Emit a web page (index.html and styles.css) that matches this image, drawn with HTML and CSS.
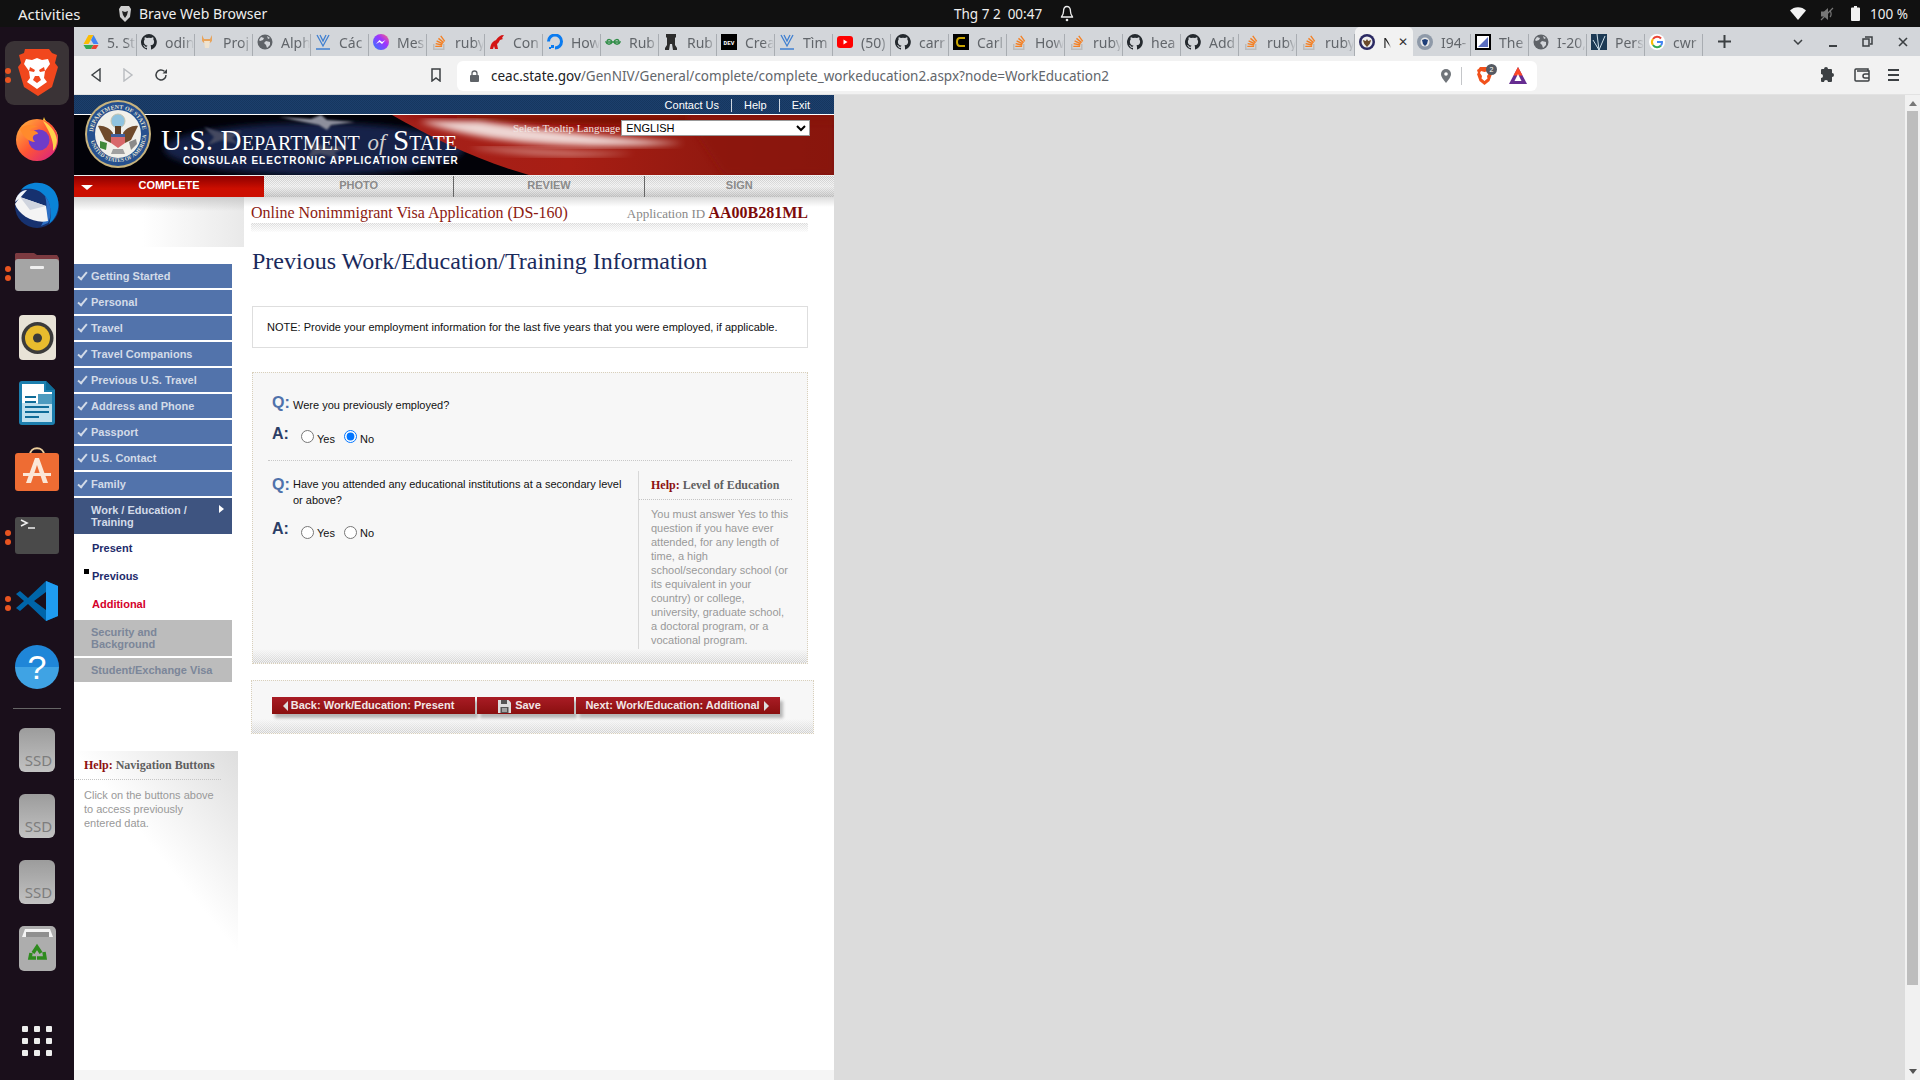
FILE: index.html
```html
<!DOCTYPE html>
<html lang="en">
<head>
  <meta charset="UTF-8" />
  <title>Previous Work/Education/Training Information</title>
  <link rel="stylesheet" href="styles.css">
</head>
<body>
  <svg class="defs" width="0" height="0">
    <defs>
      <symbol id="gh" viewBox="0 0 16 16"><path fill="#24292e" d="M8 0a8 8 0 0 0-2.5 15.6c.4.1.5-.2.5-.4v-1.4c-2.2.5-2.7-1-2.7-1-.4-.9-.9-1.2-.9-1.2-.7-.5.1-.5.1-.5.8.1 1.2.8 1.2.8.7 1.2 1.9.9 2.3.7.1-.5.3-.9.5-1.1-1.8-.2-3.6-.9-3.6-4 0-.9.3-1.6.8-2.1-.1-.2-.4-1 .1-2.1 0 0 .7-.2 2.2.8a7.6 7.6 0 0 1 4 0c1.5-1 2.2-.8 2.2-.8.4 1.1.2 1.9.1 2.1.5.6.8 1.3.8 2.1 0 3.1-1.9 3.7-3.7 3.9.3.3.6.8.6 1.5v2.2c0 .2.1.5.6.4A8 8 0 0 0 8 0z"/></symbol>
      <symbol id="so" viewBox="0 0 16 16"><path fill="#bcbbbb" d="M2 10h1.5v4.500h8.500V10h1.500v6H2z"/><path fill="#f48024" d="M4.500 10.300l6.600 1.400.3-1.400-6.600-1.400zM5.300 7.500l6.100 2.900.6-1.300-6.100-2.900zM7 4.900l5.200 4.300.9-1.100-5.200-4.300zM10.300 1.500L9.200 2.300l4 5.400 1.100-.8zM4.300 13.100h6.800v-1.400H4.300z"/></symbol>
      <symbol id="globe" viewBox="0 0 16 16"><circle cx="8" cy="8" r="7.5" fill="#5f6368"/><path fill="#d3d6da" d="M4 3l3 1-1 2-3 1-1-1zM9 7l4 1 0 3-3 3-1-3-2-2zM10 2l3 2-2 1z"/></symbol>
      <symbol id="vee" viewBox="0 0 16 16"><path fill="none" stroke="#3f7fd0" stroke-width="1.3" d="M2 1l6 11 6-11M5 1l3 6 3-6"/><path stroke="#3f7fd0" stroke-width="1.5" d="M1 15h14"/></symbol>
      <symbol id="seal-fav" viewBox="0 0 16 16"><circle cx="8" cy="8" r="8" fill="#2b2a63"/><circle cx="8" cy="8" r="5.5" fill="#efefef"/><path fill="#6b4a2a" d="M3.800 6l3 1 1.200-2 1.200 2 3-1-1.500 4-2.700 3-2.700-3z"/></symbol>
    </defs>
  </svg>

  <header class="topbar">
    <span class="activities">Activities</span>
    <span class="app-name">
      <svg width="14" height="16" viewBox="0 0 14 16"><path fill="#cfcfcf" d="M3 0h8l2 3-1 8-5 5-5-5-1-8z"/><path fill="#222" d="M4 5l3 1 3-1-1 4-2 3-2-3z"/></svg>
      Brave Web Browser
    </span>
    <span class="clock">Thg 7 2&nbsp; 00:47</span>
    <svg class="bell" width="14" height="17" viewBox="0 0 14 17"><path fill="none" stroke="#eee" stroke-width="1.3" d="M7 1.500c-3 0-3.500 3-3.500 5 0 3-2 5-2 5.500h11c0-.5-2-2.500-2-5.500 0-2-.5-5-3.500-5z"/><circle cx="7" cy="15" r="1.3" fill="#eee"/></svg>
    <span class="tray">
      <svg width="16" height="13" viewBox="0 0 16 13"><path fill="#f2f2f2" d="M0 3.500C4-1 12-1 16 3.500L8 13z"/></svg>
      <svg width="14" height="14" viewBox="0 0 14 14"><path fill="#777" d="M1 4.500h3L8 1v12L4 9.500H1z"/><path stroke="#777" fill="none" stroke-width="1.2" d="M10 4c1.500 1.500 1.500 4.500 0 6M1 13L13 1"/></svg>
      <svg class="batt-icon" width="9" height="15" viewBox="0 0 9 15"><path fill="#f2f2f2" d="M3 0h3v1.500h2a1 1 0 0 1 1 1V14a1 1 0 0 1-1 1H1a1 1 0 0 1-1-1V2.500a1 1 0 0 1 1-1h2z"/></svg>
      <span class="battery">100 %</span>
    </span>
  </header>

  <div class="desktop">
    <nav class="dock">
      <div class="dock-item running active">
        <svg width="42" height="48" viewBox="0 0 42 48"><path fill="#f1471d" d="M9 0h24l3 4 5 2-2 8 3 4-6 20-14 9-14-9-6-20 3-4-2-8 5-2z"/><path fill="#fff" d="M10 10l6 1 5-2 5 2 6-1 2 5-5 7-1 7 3 4-10 7-10-7 3-4-1-7-5-7z"/><path fill="#f1471d" d="M14 18l5 3-1 2-5-1zM28 18l-5 3 1 2 5-1zM19 27h4l2 4-4 3-4-3z"/></svg>
      </div>
      <div class="dock-item">
        <svg width="42" height="44" viewBox="0 0 42 44"><defs><linearGradient id="fx" x1="0" y1="0" x2="1" y2="1"><stop offset="0" stop-color="#ffbd3f"/><stop offset=".5" stop-color="#ff5634"/><stop offset="1" stop-color="#d41b8d"/></linearGradient></defs><path fill="#ffc93c" d="M28 0c1 5 8 8 12 14 3 5 2 12 0 14L24 12z"/><circle cx="21" cy="23" r="21" fill="url(#fx)"/><path fill="#ffd24a" d="M27 4c6 3 13 10 14 19 0 5-2 9-4 11 1-8-2-17-10-30z"/><circle cx="23" cy="23" r="10.500" fill="#6f3cc9"/><path fill="#ff8a2c" d="M4 12c4-5 12-5 18-2-5 0-8 2-8 4 5-1 8 1 8 3-5 0-7 4-3 8-6 0-12-5-15-13z"/></svg>
      </div>
      <div class="dock-item">
        <svg width="48" height="46" viewBox="0 0 48 46"><circle cx="24" cy="24" r="22" fill="#16316f"/><path fill="#0a84d8" d="M8 8C16-2 34-2 42 10c6 10 4 24-6 32 2-3 4-22-6-30C24 6 14 6 8 8z"/><path fill="#2c6fc4" d="M32 14c7 8 7 20 3 27l-7 3c5-8 7-20 4-30z"/><path fill="#f4f4f4" d="M7 15l26 9 2 15C22 42 6 34 2 22z"/><path fill="#cfd4de" d="M7 15l10 13 16-4z"/><path fill="#f2f5fa" d="M2 20C3 14 8 8 14 8l-7 8z"/></svg>
      </div>
      <div class="dock-item running">
        <svg width="44" height="40" viewBox="0 0 44 40"><path fill="#7c3a40" d="M1 2h18l3 2h20l2 3v10H0V3z"/><rect y="8" width="44" height="32" rx="3" fill="#a5a5a5"/><rect x="15" y="15" width="14" height="3" rx="1" fill="#efefef"/></svg>
      </div>
      <div class="dock-item">
        <svg width="37" height="45" viewBox="0 0 37 45"><rect width="37" height="45" rx="4" fill="#e8e3d7"/><circle cx="18.500" cy="23" r="16" fill="#3b3b3b"/><circle cx="18.500" cy="23" r="12.500" fill="#e9bc2e"/><circle cx="18.500" cy="23" r="4.500" fill="#3a3a3a"/></svg>
      </div>
      <div class="dock-item">
        <svg width="36" height="44" viewBox="0 0 36 44"><path fill="#1d7fae" d="M3 0h24l9 9v32a3 3 0 0 1-3 3H3a3 3 0 0 1-3-3V3a3 3 0 0 1 3-3z"/><path fill="#fff" d="M3 3h22v8h8v30H3z"/><path fill="#bfe0ee" d="M3 22h30v19H3z"/><path fill="#0f6c98" d="M27 0l9 9h-9zM6 15h11v2H6zM6 20h11v2H6zM6 25h24v2H6zM6 30h24v2H6zM6 35h14v2H6z"/><rect x="19" y="13" width="14" height="10" fill="#4d9bbf"/></svg>
      </div>
      <div class="dock-item">
        <svg width="44" height="44" viewBox="0 0 44 44"><path fill="none" stroke="#eccd9a" stroke-width="2" d="M15 8c0-9 14-9 14 0"/><rect y="6" width="44" height="38" rx="3" fill="#ee6c33"/><path fill="#fbe7d7" d="M20 11h4l9 25h-5l-6-18-6 18h-5zM8 26h28v3H8z"/></svg>
      </div>
      <div class="dock-item running">
        <svg width="44" height="37" viewBox="0 0 44 37"><rect width="44" height="37" rx="3" fill="#4a4a4a"/><path fill="none" stroke="#eee" stroke-width="1.6" d="M6 3l6 3-6 3M13 11h7"/></svg>
      </div>
      <div class="dock-item running">
        <svg width="42" height="42" viewBox="0 0 42 42"><path fill="#0065a9" d="M30 1L12 18 4 11 0 14l8 7-8 7 4 3 8-7 18 17 12-5V6zM30 12v18l-12-9z"/><path fill="#1f9cf0" d="M30 1l12 5v30l-12 5z"/></svg>
      </div>
      <div class="dock-item">
        <div class="help-ball">?</div>
      </div>
      <div class="dock-sep"></div>
      <div class="dock-item ssd"><span>SSD</span></div>
      <div class="dock-item ssd"><span>SSD</span></div>
      <div class="dock-item ssd"><span>SSD</span></div>
      <div class="dock-item">
        <svg width="37" height="45" viewBox="0 0 37 45"><rect width="37" height="45" rx="5" fill="#adadad"/><path fill="#f4f4f4" d="M6 3h25l3 8H3z"/><rect x="7" y="6" width="23" height="5" fill="#8f8f8f"/><g fill="none" stroke="#2e8b1e" stroke-width="3.5"><path d="M14 27l4-6 4 6"/><path d="M25 26l1 6h-8"/><path d="M12 27l-1 5h6"/></g></svg>
      </div>
      <div class="app-grid">
        <i></i><i></i><i></i><i></i><i></i><i></i><i></i><i></i><i></i>
      </div>
    </nav>

    <div class="browser">
      <div class="tabstrip">
        <div class="tab"><svg class="fav" viewBox="0 0 16 16"><path fill="#fbbc04" d="M5.500 1h5l-5 9H.5z"/><path fill="#34a853" d="M.5 11l2.500 4h5l2.500-4z"/><path fill="#4285f4" d="M10.500 1l5 9h-5L8 6z"/><path fill="#ea4335" d="M10.500 11h5L13 15H8z"/></svg><span class="tab-title">5. St</span></div>
        <div class="tab"><svg class="fav"><use href="#gh"/></svg><span class="tab-title">odin</span></div>
        <div class="tab"><svg class="fav" viewBox="0 0 16 16"><path fill="#e8a45c" d="M3 1l2 4h6l2-4v6l-2 2H5L3 7z"/><path fill="#efe3cf" d="M5 7h6l-1 7H6z"/></svg><span class="tab-title">Proj</span></div>
        <div class="tab"><svg class="fav"><use href="#globe"/></svg><span class="tab-title">Alph</span></div>
        <div class="tab"><svg class="fav"><use href="#vee"/></svg><span class="tab-title">Các</span></div>
        <div class="tab"><svg class="fav" viewBox="0 0 16 16"><defs><linearGradient id="ms" x1="0" y1="1" x2="1" y2="0"><stop offset="0" stop-color="#2a7bff"/><stop offset=".6" stop-color="#a033ff"/><stop offset="1" stop-color="#ff6a70"/></linearGradient></defs><circle cx="8" cy="8" r="8" fill="url(#ms)"/><path fill="#fff" d="M3 10l3.500-4 2.500 2 3.500-2-3.500 4-2.500-2z"/></svg><span class="tab-title">Mes</span></div>
        <div class="tab"><svg class="fav"><use href="#so"/></svg><span class="tab-title">ruby</span></div>
        <div class="tab"><svg class="fav" viewBox="0 0 16 16"><path fill="#d41414" d="M15 1c-4 0-6 2-8 5-2 1-5 2-6 9h3l1-3 1 3h3l-1-5c2-1 2-3 3-4l3-1-1-1z"/></svg><span class="tab-title">Con</span></div>
        <div class="tab"><svg class="fav" viewBox="0 0 16 16"><path fill="none" stroke="#0a7bf0" stroke-width="3" d="M8 14a6.500 6.500 0 1 0-6.500-6.500"/><path fill="#0a7bf0" d="M4 11h3v3H4zM2 13h2v2H2z"/></svg><span class="tab-title">How</span></div>
        <div class="tab"><svg class="fav" viewBox="0 0 16 16"><path fill="none" stroke="#2f8d46" stroke-width="1.5" d="M8 8H1c1 3 5 3 6 0-1-3-4-3-5-1M8 8h7c-1 3-5 3-6 0 1-3 4-3 5-1"/></svg><span class="tab-title">Rub</span></div>
        <div class="tab"><svg class="fav" viewBox="0 0 16 16"><path fill="#2d2d2d" d="M3 0h10v3l-1 1v7l2 3v2h-4l-1-6H7l-1 6H2v-2l2-3V4L3 3z"/></svg><span class="tab-title">Rub</span></div>
        <div class="tab"><svg class="fav" viewBox="0 0 16 16"><rect width="16" height="16" fill="#000"/><text x="8" y="10.500" font-size="6" font-weight="700" text-anchor="middle" fill="#fff" font-family="Liberation Mono, monospace">DEV</text></svg><span class="tab-title">Crea</span></div>
        <div class="tab"><svg class="fav"><use href="#vee"/></svg><span class="tab-title">Tìm</span></div>
        <div class="tab"><svg class="fav" viewBox="0 0 16 16"><rect y="2" width="16" height="12" rx="3" fill="#f00"/><path fill="#fff" d="M6.500 5.500l4 2.500-4 2.500z"/></svg><span class="tab-title">(50)</span></div>
        <div class="tab"><svg class="fav"><use href="#gh"/></svg><span class="tab-title">carr</span></div>
        <div class="tab"><svg class="fav" viewBox="0 0 16 16"><rect width="16" height="16" fill="#000"/><path fill="none" stroke="#c9a400" stroke-width="2" d="M12 4H7Q4 4 4 8t3 4h5"/></svg><span class="tab-title">Carl</span></div>
        <div class="tab"><svg class="fav"><use href="#so"/></svg><span class="tab-title">How</span></div>
        <div class="tab"><svg class="fav"><use href="#so"/></svg><span class="tab-title">ruby</span></div>
        <div class="tab"><svg class="fav"><use href="#gh"/></svg><span class="tab-title">hea</span></div>
        <div class="tab"><svg class="fav"><use href="#gh"/></svg><span class="tab-title">Add</span></div>
        <div class="tab"><svg class="fav"><use href="#so"/></svg><span class="tab-title">ruby</span></div>
        <div class="tab"><svg class="fav"><use href="#so"/></svg><span class="tab-title">ruby</span></div>
        <div class="tab current"><svg class="fav"><use href="#seal-fav"/></svg><span class="tab-title">N</span><span class="tab-close">✕</span></div>
        <div class="tab"><svg class="fav" viewBox="0 0 16 16"><circle cx="8" cy="8" r="8" fill="#8e99a8"/><circle cx="8" cy="8" r="4.500" fill="#e8e8e8"/><path fill="#1f3f78" d="M5 6l3-1 3 1-1 4-2 2-2-2z"/></svg><span class="tab-title">I94-</span></div>
        <div class="tab"><svg class="fav" viewBox="0 0 16 16"><rect width="16" height="16" fill="#000"/><rect x="2" y="2" width="12" height="12" fill="#fff"/><path fill="#5b6fc0" d="M13 3v10H3z"/></svg><span class="tab-title">The</span></div>
        <div class="tab"><svg class="fav"><use href="#globe"/></svg><span class="tab-title">I-20,</span></div>
        <div class="tab"><svg class="fav" viewBox="0 0 16 16"><rect width="16" height="16" fill="#1c3a55"/><path stroke="#cfe0ea" d="M8 16L6 0M8 16l6-14M8 16L2 6"/></svg><span class="tab-title">Pers</span></div>
        <div class="tab"><svg class="fav" viewBox="0 0 16 16"><circle cx="8" cy="8" r="8" fill="#fff"/><path fill="none" stroke="#ea4335" stroke-width="2" d="M12 4.500A5 5 0 0 0 4 5"/><path fill="none" stroke="#fbbc04" stroke-width="2" d="M4 5a5 5 0 0 0 0 6"/><path fill="none" stroke="#34a853" stroke-width="2" d="M4 11a5 5 0 0 0 8 .5"/><path fill="none" stroke="#4285f4" stroke-width="2" d="M12 11.500A5 5 0 0 0 13 8H8"/></svg><span class="tab-title">cwr</span></div>
        <svg class="new-tab" width="13" height="13" viewBox="0 0 13 13"><path stroke="#3c4043" stroke-width="2" d="M6.500 0v13M0 6.500h13"/></svg>
        <div class="win-btns">
          <svg width="10" height="6" viewBox="0 0 10 6"><path fill="none" stroke="#3c4043" stroke-width="1.5" d="M1 1l4 4 4-4"/></svg>
          <svg width="10" height="10" viewBox="0 0 10 10"><path stroke="#3c4043" stroke-width="2" d="M1 9h8"/></svg>
          <svg width="11" height="11" viewBox="0 0 11 11"><path fill="none" stroke="#3c4043" stroke-width="1.5" d="M3 1h7v7H8M1 3h6v7H1z"/></svg>
          <svg width="10" height="10" viewBox="0 0 10 10"><path stroke="#3c4043" stroke-width="1.6" d="M1 1l8 8M9 1l-8 8"/></svg>
        </div>
      </div>

      <div class="toolbar">
        <div class="nav-btns">
          <svg width="12" height="14" viewBox="0 0 12 14"><path fill="none" stroke="#3c4043" stroke-width="1.4" d="M10 1v12L2 7z"/></svg>
          <svg width="12" height="14" viewBox="0 0 12 14"><path fill="none" stroke="#b9bcc0" stroke-width="1.4" d="M2 1v12l8-6z"/></svg>
          <svg width="14" height="14" viewBox="0 0 14 14"><path fill="none" stroke="#3c4043" stroke-width="1.5" d="M12 7a5 5 0 1 1-1.600-3.700"/><path fill="#3c4043" d="M13 1v4.500H8.500z"/></svg>
        </div>
        <svg class="bookmark" width="10" height="14" viewBox="0 0 10 14"><path fill="none" stroke="#3c4043" stroke-width="1.5" d="M1 1h8v12l-4-3-4 3z"/></svg>
        <div class="omnibox">
          <svg width="9" height="12" viewBox="0 0 9 12"><path fill="none" stroke="#5f6368" stroke-width="1.3" d="M2 5V3.500a2.500 2.500 0 0 1 5 0V5"/><rect y="5" width="9" height="7" rx="1" fill="#5f6368"/></svg>
          <span class="url"><b>ceac.state.gov</b>/GenNIV/General/complete/complete_workeducation2.aspx?node=WorkEducation2</span>
          <svg class="pin" width="10" height="14" viewBox="0 0 10 14"><path fill="#70757a" d="M5 0a5 5 0 0 1 5 5c0 3.500-5 9-5 9S0 8.500 0 5a5 5 0 0 1 5-5z"/><circle cx="5" cy="5" r="1.800" fill="#fff"/></svg>
          <span class="omni-sep"></span>
          <span class="shield">
            <svg width="15" height="18" viewBox="0 0 15 18"><path fill="#f1511b" d="M3 0h9l1.500 2L15 3l-1 3 1 1-2.500 7L7.500 18l-5-4L0 7l1-1-1-3 1.500-1z"/><path fill="#fff" d="M4 4l3.500 1L11 4l1 2-2 3 .5 2.500L7.500 14l-3-2.500L5 9 3 6z"/></svg>
            <i class="badge">2</i>
          </span>
          <svg class="bat" width="18" height="17" viewBox="0 0 18 17"><path fill="#662d91" d="M9 0l9 17H0z"/><path fill="#ff4724" d="M9 0l4.500 8.500H4.500z"/><path fill="#fff" d="M9 7l3.500 7h-7z"/></svg>
        </div>
        <div class="tool-icons">
          <svg width="16" height="16" viewBox="0 0 16 16"><path fill="#3c4043" d="M6 0a2 2 0 0 1 2 2h3a1 1 0 0 1 1 1v3a2 2 0 0 1 0 4v4a1 1 0 0 1-1 1H8a2 2 0 0 0-4 0H2a1 1 0 0 1-1-1v-3a2 2 0 0 0 0-4V3a1 1 0 0 1 1-1h2a2 2 0 0 1 2-2z"/></svg>
          <svg width="16" height="14" viewBox="0 0 16 14"><path fill="none" stroke="#3c4043" stroke-width="1.5" d="M14 3V1H2a1 1 0 0 0-1 1v10a1 1 0 0 0 1 1h12a1 1 0 0 0 1-1V3H3M15 6h-4a1.500 1.500 0 0 0 0 4h4"/></svg>
          <svg width="11" height="14" viewBox="0 0 11 14"><path stroke="#3c4043" stroke-width="2" d="M0 2h11M0 7h11M0 12h11"/></svg>
        </div>
      </div>

      <div class="viewport">
        <div class="page">
          <div class="site-header">
            <div class="util-strip">
              <a>Contact Us</a>
              <a>Help</a>
              <a>Exit</a>
            </div>
            <div class="banner">
              <svg class="banner-art" viewBox="0 0 760 60" preserveAspectRatio="none">
                <defs>
                  <filter id="b3"><feGaussianBlur stdDeviation="3"/></filter>
                  <filter id="b1"><feGaussianBlur stdDeviation="1.2"/></filter>
                  <linearGradient id="redflag" x1="0" y1="0" x2="1" y2="0">
                    <stop offset="0" stop-color="#a3201a"/>
                    <stop offset=".4" stop-color="#a81e14"/>
                    <stop offset="1" stop-color="#7f150c"/>
                  </linearGradient>
                </defs>
                <rect width="760" height="60" fill="#020208"/>
                <ellipse cx="240" cy="34" rx="150" ry="26" fill="#18244a" filter="url(#b3)"/>
                <path fill="#8d8f9c" filter="url(#b1)" d="M205 2l32 2 10-4 6 5 28 2-24 3-4 5-8-5z"/>
                <path fill="#454a60" filter="url(#b1)" d="M130 12l20 6 18-2-10 7 6 6-16-4-14 5 6-8zM230 26l24 6 20 0-14 6 8 6-22-5-12 4 4-8z"/>
                <path fill="url(#redflag)" d="M318 0C360 24 405 46 455 60H760V0z"/>
                <path fill="#7a0a06" filter="url(#b3)" d="M320 0H760V10C640 14 420 10 320 0z"/>
                <path fill="#f6eae8" opacity=".9" filter="url(#b3)" d="M345 6C410 28 500 36 610 28 530 22 460 14 405 6z"/>
                <path fill="#e9c9c4" opacity=".55" filter="url(#b3)" d="M395 32C450 42 500 44 560 38 500 36 440 32 395 32z"/>
                <path fill="#8c180f" opacity=".75" filter="url(#b3)" d="M610 0H760V60H650z"/>
              </svg>
              <div class="dept-name">
                <div class="dept-title">U.S. Department <i>of</i> State</div>
                <div class="dept-sub">CONSULAR ELECTRONIC APPLICATION CENTER</div>
              </div>
              <div class="lang-pick">
                <label>Select Tooltip Language</label>
                <select><option>ENGLISH</option></select>
              </div>
            </div>
            <svg class="seal" width="66" height="68" viewBox="0 0 66 68">
              <defs>
                <path id="arc-top" d="M8 34a25 25 0 0 1 50 0"/>
                <path id="arc-bot" d="M5 34a28 28 0 0 0 56 0"/>
              </defs>
              <ellipse cx="33" cy="34" rx="33" ry="34" fill="#c7b37e"/>
              <ellipse cx="33" cy="34" rx="31" ry="32" fill="#25508f"/>
              <text font-size="6" fill="#e6e3d2" font-family="Liberation Serif, serif" font-weight="700"><textPath href="#arc-top" startOffset="2">DEPARTMENT OF STATE</textPath></text>
              <text font-size="5.5" fill="#e6e3d2" font-family="Liberation Serif, serif" font-weight="700"><textPath href="#arc-bot" startOffset="7">UNITED STATES OF AMERICA</textPath></text>
              <ellipse cx="33" cy="34" rx="23" ry="24" fill="#f1f0ea"/>
              <circle cx="33" cy="21" r="7" fill="#8fc3df" stroke="#c4c4b0"/>
              <path fill="#6f4a2b" d="M13 26c5-1 12 2 15 7l-2 10-6-3zM53 26c-5-1-12 2-15 7l2 10 6-3z"/>
              <path fill="#5d3c22" d="M30 26h6v8h-6z"/>
              <path fill="#d8686a" d="M26 34h14v9l-7 5-7-5z"/>
              <path fill="#3f5f9c" d="M26 34h14v3H26z"/>
              <path fill="#3f8a3a" d="M15 41l7 2-1 7-6-2z"/>
              <path fill="#8a8a8a" d="M44 42l7-3 1 5-6 6z"/>
              <path fill="#a0a0a0" d="M28 49h10l2 5H26z"/>
            </svg>
            <div class="steps">
              <div class="step on"><span class="step-caret"></span>COMPLETE</div>
              <div class="step">PHOTO</div>
              <div class="step">REVIEW</div>
              <div class="step">SIGN</div>
            </div>
          </div>

          <div class="page-body">
            <aside class="leftcol">
              <div class="side-shade"></div>
              <ul class="side-nav">
                <li class="done">Getting Started</li>
                <li class="done">Personal</li>
                <li class="done">Travel</li>
                <li class="done">Travel Companions</li>
                <li class="done">Previous U.S. Travel</li>
                <li class="done">Address and Phone</li>
                <li class="done">Passport</li>
                <li class="done">U.S. Contact</li>
                <li class="done">Family</li>
                <li class="open">Work / Education /<br>Training</li>
                <li class="sub">Present</li>
                <li class="sub here">Previous</li>
                <li class="sub red">Additional</li>
                <li class="off">Security and<br>Background</li>
                <li class="off">Student/Exchange Visa</li>
              </ul>
              <div class="nav-help">
                <h4><span>Help:</span> Navigation Buttons</h4>
                <p>Click on the buttons above to access previously entered data.</p>
              </div>
            </aside>

            <main class="maincol">
              <div class="app-head">
                <span class="app-title">Online Nonimmigrant Visa Application (DS-160)</span>
                <span class="app-id">Application ID <b>AA00B281ML</b></span>
              </div>
              <div class="dither-band"></div>
              <h1>Previous Work/Education/Training Information</h1>
              <div class="note">NOTE: Provide your employment information for the last five years that you were employed, if applicable.</div>

              <section class="qa-box">
                <div class="qa first">
                  <div class="q"><b>Q:</b><span>Were you previously employed?</span></div>
                  <div class="a">
                    <b>A:</b>
                    <label><input type="radio" name="prev">Yes</label>
                    <label><input type="radio" name="prev" checked>No</label>
                  </div>
                </div>
                <div class="qa-row">
                  <div class="qa">
                    <div class="q"><b>Q:</b><span>Have you attended any educational institutions at a secondary level or above?</span></div>
                    <div class="a">
                      <b>A:</b>
                      <label><input type="radio" name="edu">Yes</label>
                      <label><input type="radio" name="edu">No</label>
                    </div>
                  </div>
                  <div class="qa-help">
                    <h4><span>Help:</span> Level of Education</h4>
                    <p>You must answer Yes to this question if you have ever attended, for any length of time, a high school/secondary school (or its equivalent in your country) or college, university, graduate school, a doctoral program, or a vocational program.</p>
                  </div>
                </div>
              </section>

              <section class="btn-box">
                <div class="btn-row">
                  <a class="btn back"><i class="arr-l"></i>Back: Work/Education: Present</a>
                  <a class="btn save">
                    <svg width="13" height="13" viewBox="0 0 13 13"><path fill="#ddd" d="M0 0h10.500L13 2.500V13H0z"/><path fill="#555" d="M3 0h6v4H3zM2.500 7h8v6h-8z"/><path fill="#eee" d="M4 8.500h5v1H4zM4 10.500h5v1H4z"/></svg>
                    Save
                  </a>
                  <a class="btn next">Next: Work/Education: Additional<i class="arr-r"></i></a>
                </div>
              </section>
            </main>
          </div>
        </div>
        <div class="gutter"></div>
        <div class="scrollbar">
          <span class="sb-up"></span>
          <span class="sb-thumb"></span>
          <span class="sb-down"></span>
        </div>
      </div>
    </div>
  </div>
</body>
</html>
```

FILE: styles.css
```css
html, body {
  margin: 0;
  height: 1080px;
  overflow: hidden;
}
body {
  font-family: "Liberation Sans", Arial, sans-serif;
  background: #111;
  display: flex;
  flex-direction: column;
}
.defs { position: absolute; }

/* gnome top bar */
.topbar {
  height: 27px;
  flex: none;
  background: #111;
  color: #eee;
  font-family: "Noto Sans", sans-serif;
  font-size: 13.5px;
  display: flex;
  align-items: center;
}
.activities { margin-left: 18px; width: 100px; font-size: 15px; }
.app-name { display: flex; align-items: center; gap: 7px; width: 836px; font-size: 14px; }
.clock { width: 106px; }
.tray { margin-left: auto; margin-right: 12px; display: flex; align-items: center; gap: 14px; }
.batt-icon { margin-left: 3px; }
.battery { margin-left: -4px; }

.desktop { flex: 1; display: flex; min-height: 0; }

/* dock */
.dock {
  width: 74px;
  flex: none;
  background: #1a0f1b;
  padding-top: 13px;
  box-sizing: border-box;
  display: flex;
  flex-direction: column;
  align-items: center;
}
.dock-item {
  width: 64px;
  height: 66px;
  display: flex;
  align-items: center;
  justify-content: center;
  flex: none;
  position: relative;
}
.dock-item.active::after {
  content: "";
  position: absolute;
  inset: 1px 0;
  background: #3a3336;
  border-radius: 9px;
  z-index: 0;
}
.dock-item svg, .dock-item div { position: relative; z-index: 1; }
.dock-item.running::before {
  content: "";
  position: absolute;
  left: 0;
  top: 28px;
  width: 6px;
  height: 6px;
  border-radius: 50%;
  background: #e95420;
  box-shadow: 0 9px 0 #e95420;
  z-index: 2;
}
.help-ball {
  width: 44px;
  height: 44px;
  border-radius: 50%;
  background: linear-gradient(#1f86d8 50%, #3fa3e4 50%);
  color: #fff;
  font-size: 34px;
  line-height: 44px;
  text-align: center;
}
.dock-sep { width: 48px; height: 1px; background: #666; margin: 8px 0 8px; flex: none; }
.ssd::after {
  content: "";
  position: absolute;
  left: 14px;
  top: 11px;
  width: 36px;
  height: 44px;
  border-radius: 6px;
  background: linear-gradient(#9c9c9c, #c2c2c2);
}
.ssd span {
  position: relative;
  z-index: 1;
  font-family: "Noto Sans", sans-serif;
  font-size: 15px;
  color: #7d7d7d;
  margin-top: 20px;
  margin-left: 3px;
}
.app-grid {
  margin-top: 45px;
  display: grid;
  grid-template-columns: repeat(3, 6px);
  gap: 6px;
}
.app-grid i { height: 6px; background: #eee; border-radius: 1px; }

.browser { flex: 1; min-width: 0; display: flex; flex-direction: column; }

/* tabs */
.tabstrip {
  height: 29px;
  flex: none;
  background: #d3d6da;
  padding-left: 5px;
  display: flex;
  align-items: stretch;
  font-family: "Noto Sans", sans-serif;
}
.tab {
  width: 58px;
  flex: none;
  box-sizing: border-box;
  padding: 7px 0 0 4px;
  display: flex;
  align-items: flex-start;
  gap: 8px;
  position: relative;
}
.tab::after {
  content: "";
  position: absolute;
  right: 0;
  top: 7px;
  bottom: 0;
  width: 1px;
  background: #a9adb2;
}
.tab.current { background: #f2f2f2; border-radius: 5px 5px 0 0; }
.tab.current::after { display: none; }
.fav { width: 16px; height: 16px; flex: none; }
.tab-title {
  width: 29px;
  overflow: hidden;
  white-space: nowrap;
  font-size: 14px;
  line-height: 17px;
  color: #62666b;
  -webkit-mask-image: linear-gradient(90deg, #000 65%, transparent);
  mask-image: linear-gradient(90deg, #000 65%, transparent);
}
.current .tab-title { width: 8px; color: #222; }
.tab-close { font-size: 12px; line-height: 16px; color: #333; margin-left: -1px; }
.new-tab { align-self: center; margin-left: 15px; }
.win-btns {
  margin-left: 62px;
  width: 127px;
  display: flex;
  align-items: center;
  justify-content: space-between;
  padding-right: 12px;
  box-sizing: border-box;
}

/* toolbar */
.toolbar {
  height: 39px;
  flex: none;
  background: #f2f2f2;
  border-bottom: 1px solid #e2e2e2;
  box-sizing: border-box;
  display: flex;
  align-items: center;
}
.nav-btns { display: flex; align-items: center; gap: 20px; margin-left: 16px; width: 341px; }
.bookmark { width: 10px; }
.omnibox {
  margin-left: 16px;
  width: 1080px;
  height: 30px;
  background: #fff;
  border-radius: 6px;
  display: flex;
  align-items: center;
  padding-left: 13px;
  box-sizing: border-box;
  margin-top: 1px;
}
.url {
  margin-left: 12px;
  width: 940px;
  font-family: "Noto Sans", sans-serif;
  font-size: 13.5px;
  color: #62666b;
  white-space: nowrap;
}
.url b { font-weight: 400; color: #202124; }
.pin { margin-left: 10px; }
.omni-sep { width: 1px; height: 18px; background: #c4c6c9; margin-left: 10px; }
.shield { position: relative; display: flex; margin-left: 15px; }
.badge {
  position: absolute;
  left: 9px;
  top: -3px;
  width: 11px;
  height: 11px;
  border-radius: 50%;
  background: #555a63;
  color: #fff;
  font-size: 7px;
  font-style: normal;
  text-align: center;
  line-height: 11px;
}
.bat { margin-left: 17px; }
.tool-icons {
  margin-left: 283px;
  width: 80px;
  display: flex;
  align-items: center;
  gap: 18px;
}

/* viewport */
.viewport { flex: 1; display: flex; min-height: 0; }
.page { width: 760px; flex: none; background: #fff; position: relative; display: flex; flex-direction: column; }
.page::after {
  content: "";
  position: absolute;
  left: 0;
  right: 0;
  bottom: 0;
  height: 10px;
  background: #f5f5f5;
}
.gutter { flex: 1; background: #dcdcdc; }
.scrollbar {
  width: 15px;
  flex: none;
  background: #f1f1f1;
  display: flex;
  flex-direction: column;
  align-items: center;
}
.sb-up, .sb-down { width: 0; height: 0; border: 4px solid transparent; }
.sb-up { border-bottom: 5px solid #777; border-top: 0; margin: 6px 0 5px; }
.sb-down { border-top: 5px solid #555; border-bottom: 0; margin-top: auto; margin-bottom: 6px; }
.sb-thumb { width: 11px; height: 874px; background: #bdbdbd; }

/* site header */
.site-header { flex: none; }
.util-strip {
  height: 19px;
  box-sizing: border-box;
  padding: 1px 24px 0 0;
  background: repeating-conic-gradient(#16365f 0 25%, #1c3f6c 0 50%) 0 0/2px 2px;
  display: flex;
  justify-content: flex-end;
  align-items: center;
  font-size: 11px;
  color: #fff;
}
.util-strip a { padding: 0 12px; border-left: 1px solid #cfd6e0; line-height: 13px; }
.util-strip a:first-child { border-left: 0; }
.util-strip a:last-child { padding-right: 0; }
.banner {
  height: 60px;
  border-top: 1px solid #fff;
  border-bottom: 1px solid #eee;
  display: flex;
  position: relative;
  overflow: hidden;
}
.banner-art { position: absolute; left: 0; top: 0; width: 100%; height: 100%; }
.dept-name { position: relative; margin-left: 87px; width: 340px; padding-top: 10px; color: #fff; }
.dept-title {
  font-family: "Liberation Serif", serif;
  font-size: 29px;
  line-height: 30px;
  font-variant: small-caps;
  letter-spacing: .15px;
  white-space: nowrap;
}
.dept-title i { font-variant: normal; font-size: 23px; color: #cfcfcf; }
.dept-sub {
  font-weight: 700;
  font-size: 10px;
  letter-spacing: 1px;
  line-height: 12px;
  margin: -3px 0 0 22px;
  white-space: nowrap;
}
.lang-pick { position: relative; margin-left: 12px; display: flex; align-items: flex-start; padding-top: 5px; gap: 1px; }
.lang-pick label {
  font-family: "Liberation Serif", serif;
  font-size: 11px;
  line-height: 16px;
  color: #f0e6e4;
  white-space: nowrap;
}
.lang-pick select {
  width: 189px;
  height: 16px;
  font-family: "Liberation Sans", sans-serif;
  font-size: 11px;
  padding: 0;
  background: #fff;
  border: 1px solid #999;
}
.seal { position: absolute; left: 11px; top: 5px; }
.steps { display: flex; height: 21px; }
.step {
  flex: 1;
  background:
    linear-gradient(rgba(232,232,232,.2), rgba(248,248,248,.6) 50%, rgba(180,180,180,.5)),
    repeating-conic-gradient(#c0c0c0 0 25%, #efefef 0 50%) 0 0/2px 2px;
  border-right: 1px solid #666;
  box-sizing: border-box;
  text-align: center;
  font-size: 11px;
  font-weight: 700;
  line-height: 19px;
  color: #8a8a8a;
}
.step:last-child { border-right: 0; }
.step.on {
  flex: none;
  width: 190px;
  background: linear-gradient(#8c0000, #cc0e00 60%);
  color: #fff;
  border-right: 0;
  position: relative;
}
.step-caret {
  position: absolute;
  left: 7px;
  top: 9px;
  border: 5px solid transparent;
  border-top: 5px solid #fff;
  border-left-width: 6px;
  border-right-width: 6px;
}

.page-body {
  display: flex;
  flex: 1;
  background: linear-gradient(#dcdcdc, #fff 10px);
}

/* left column */
.leftcol { width: 177px; flex: none; }
.side-shade {
  width: 170px;
  height: 50px;
  background:
    linear-gradient(rgba(190,190,190,.7), rgba(255,255,255,0) 14px),
    linear-gradient(90deg, #fff 40%, #e9e9e9);
}
.side-nav { list-style: none; margin: 17px 0 0; padding: 0; width: 158px; }
.side-nav li {
  font-size: 11px;
  font-weight: 700;
  line-height: 12px;
  box-sizing: border-box;
  padding: 6px 10px 6px 17px;
  margin-bottom: 2px;
  position: relative;
}
.done { background: #5273ab; color: #d3dbe8; height: 24px; }
.done::before {
  content: "";
  position: absolute;
  left: 6px;
  top: 6px;
  width: 3px;
  height: 8px;
  border: solid #d3dbe8;
  border-width: 0 2.5px 2.5px 0;
  transform: rotate(40deg);
}
.open { background: #3e5480; color: #d3dbe8; height: 36px; }
.open::after {
  content: "";
  position: absolute;
  left: 145px;
  top: 7px;
  border-left: 5px solid #fff;
  border-top: 4px solid transparent;
  border-bottom: 4px solid transparent;
}
.side-nav .sub {
  height: 28px;
  margin: 0;
  padding: 8px 0 0 18px;
  color: #1d2b6b;
}
.side-nav .sub:nth-child(11) { margin-top: -2px; }
.side-nav .here::before {
  content: "";
  position: absolute;
  left: 10px;
  top: 7px;
  width: 5px;
  height: 5px;
  background: #000;
}
.side-nav .red { color: #d4002a; height: 30px; }
.off { background: #bcbcbc; color: #7b8699; }
.off:last-child { height: 24px; margin: 0; }
.nav-help {
  margin-top: 69px;
  width: 164px;
  height: 202px;
  background: linear-gradient(to bottom left, #dedede, #fff 50%);
}
.nav-help h4, .qa-help h4 {
  font-family: "Liberation Serif", serif;
  font-size: 12px;
  font-weight: 700;
  color: #5f5f5f;
  margin: 0;
}
.nav-help h4 span, .qa-help h4 span { color: #8c1010; }
.nav-help h4 { padding: 7px 0 7px 10px; width: 137px; border-bottom: 1px dotted #c4c4c4; line-height: 14px; white-space: nowrap; }
.nav-help p, .qa-help p {
  font-size: 11px;
  line-height: 14px;
  color: #999;
  margin: 0;
}
.nav-help p { padding: 8px 18px 0 10px; }

/* main column */
.maincol { width: 563px; }
.app-head {
  width: 557px;
  height: 26px;
  box-sizing: border-box;
  padding-top: 5px;
  display: flex;
  justify-content: space-between;
  align-items: center;
  font-family: "Liberation Serif", serif;
  color: #8c1a12;
}
.app-title { font-size: 16px; }
.app-id { font-size: 13px; color: #888; }
.app-id b { font-size: 16px; color: #7c0a0a; }
.dither-band {
  width: 557px;
  height: 9px;
  background:
    linear-gradient(rgba(255,255,255,0), rgba(255,255,255,.9)),
    repeating-conic-gradient(#d8d8d8 0 25%, #f6f6f6 0 50%) 0 0/2px 2px;
}
h1 {
  font-family: "Liberation Serif", serif;
  font-size: 24px;
  font-weight: 400;
  color: #1a2a5c;
  margin: 13px 0 29px 1px;
  line-height: 32px;
}
.note {
  margin-left: 1px;
  width: 556px;
  height: 42px;
  box-sizing: border-box;
  border: 1px solid #dedede;
  padding: 0 14px;
  font-size: 11px;
  line-height: 40px;
  color: #111;
  white-space: nowrap;
}
.qa-box, .btn-box {
  background: #f7f7f7;
  border: 1px dotted #d9d0bb;
  box-sizing: border-box;
  position: relative;
}
.qa-box::after, .btn-box::after {
  content: "";
  position: absolute;
  left: 0;
  right: 0;
  bottom: 0;
  height: 14px;
  background:
    linear-gradient(#f7f7f7, rgba(247,247,247,0)),
    repeating-conic-gradient(#d0d0d0 0 25%, #f0f0f0 0 50%) 0 0/2px 2px;
}
.qa-box {
  margin: 24px 0 16px 1px;
  width: 556px;
  height: 292px;
  padding: 21px 15px 0;
}
.qa { font-size: 11px; color: #111; }
.qa.first { border-bottom: 1px dotted #c8c8c8; height: 67px; box-sizing: border-box; }
.q { display: flex; padding-left: 4px; }
.q b { font-size: 16px; line-height: 18px; color: #4f72ab; width: 21px; flex: none; }
.q span { line-height: 16px; padding-top: 3px; }
.a { display: flex; align-items: flex-start; margin-top: 12px; padding-left: 4px; }
.a b { font-size: 16px; line-height: 18px; color: #2c3e66; width: 28px; flex: none; }
.a label { display: flex; align-items: flex-start; line-height: 14px; width: 43px; padding-top: 7px; }
.a input { margin: -2px 3px 0 1px; width: 13px; height: 13px; }
.qa-row { display: flex; padding-top: 10px; }
.qa-row .qa { width: 370px; padding: 5px 12px 0 0; box-sizing: border-box; }
.qa-row .q span { padding-top: 0; }
.qa-row .a { margin-top: 12px; }
.qa-row .a label { padding-top: 6px; }
.qa-row .a input { margin-top: 0; }
.qa-help {
  width: 154px;
  height: 182px;
  border-left: 1px solid #d8d8d8;
  box-sizing: border-box;
}
.qa-help h4 { border-bottom: 1px dotted #c4c4c4; line-height: 14px; padding: 7px 0 7px 12px; white-space: nowrap; }
.qa-help p { padding: 7px 0 0 12px; }
.btn-box {
  width: 563px;
  height: 54px;
  padding: 16px 0 0 20px;
}
.btn-row { display: flex; position: relative; z-index: 1; }
.btn {
  height: 17px;
  box-sizing: border-box;
  background: linear-gradient(#a91c25, #8a0f0f);
  color: #f2e6e6;
  font-size: 11px;
  font-weight: 700;
  line-height: 17px;
  box-shadow: 3px 4px 3px #b5b5b5;
  display: flex;
  align-items: flex-start;
  justify-content: center;
  margin-right: 2px;
}
.back { width: 203px; padding-right: 10px; }
.save { width: 97px; gap: 4px; padding-right: 12px; }
.save svg { margin-top: 3px; }
.next { width: 204px; margin: 0; padding-right: 2px; }
.arr-l, .arr-r { border-top: 5px solid transparent; border-bottom: 5px solid transparent; margin-top: 4px; }
.arr-l { border-right: 5px solid #ddd; margin-right: 3px; }
.arr-r { border-left: 5px solid #ddd; margin-left: 4px; }
```
